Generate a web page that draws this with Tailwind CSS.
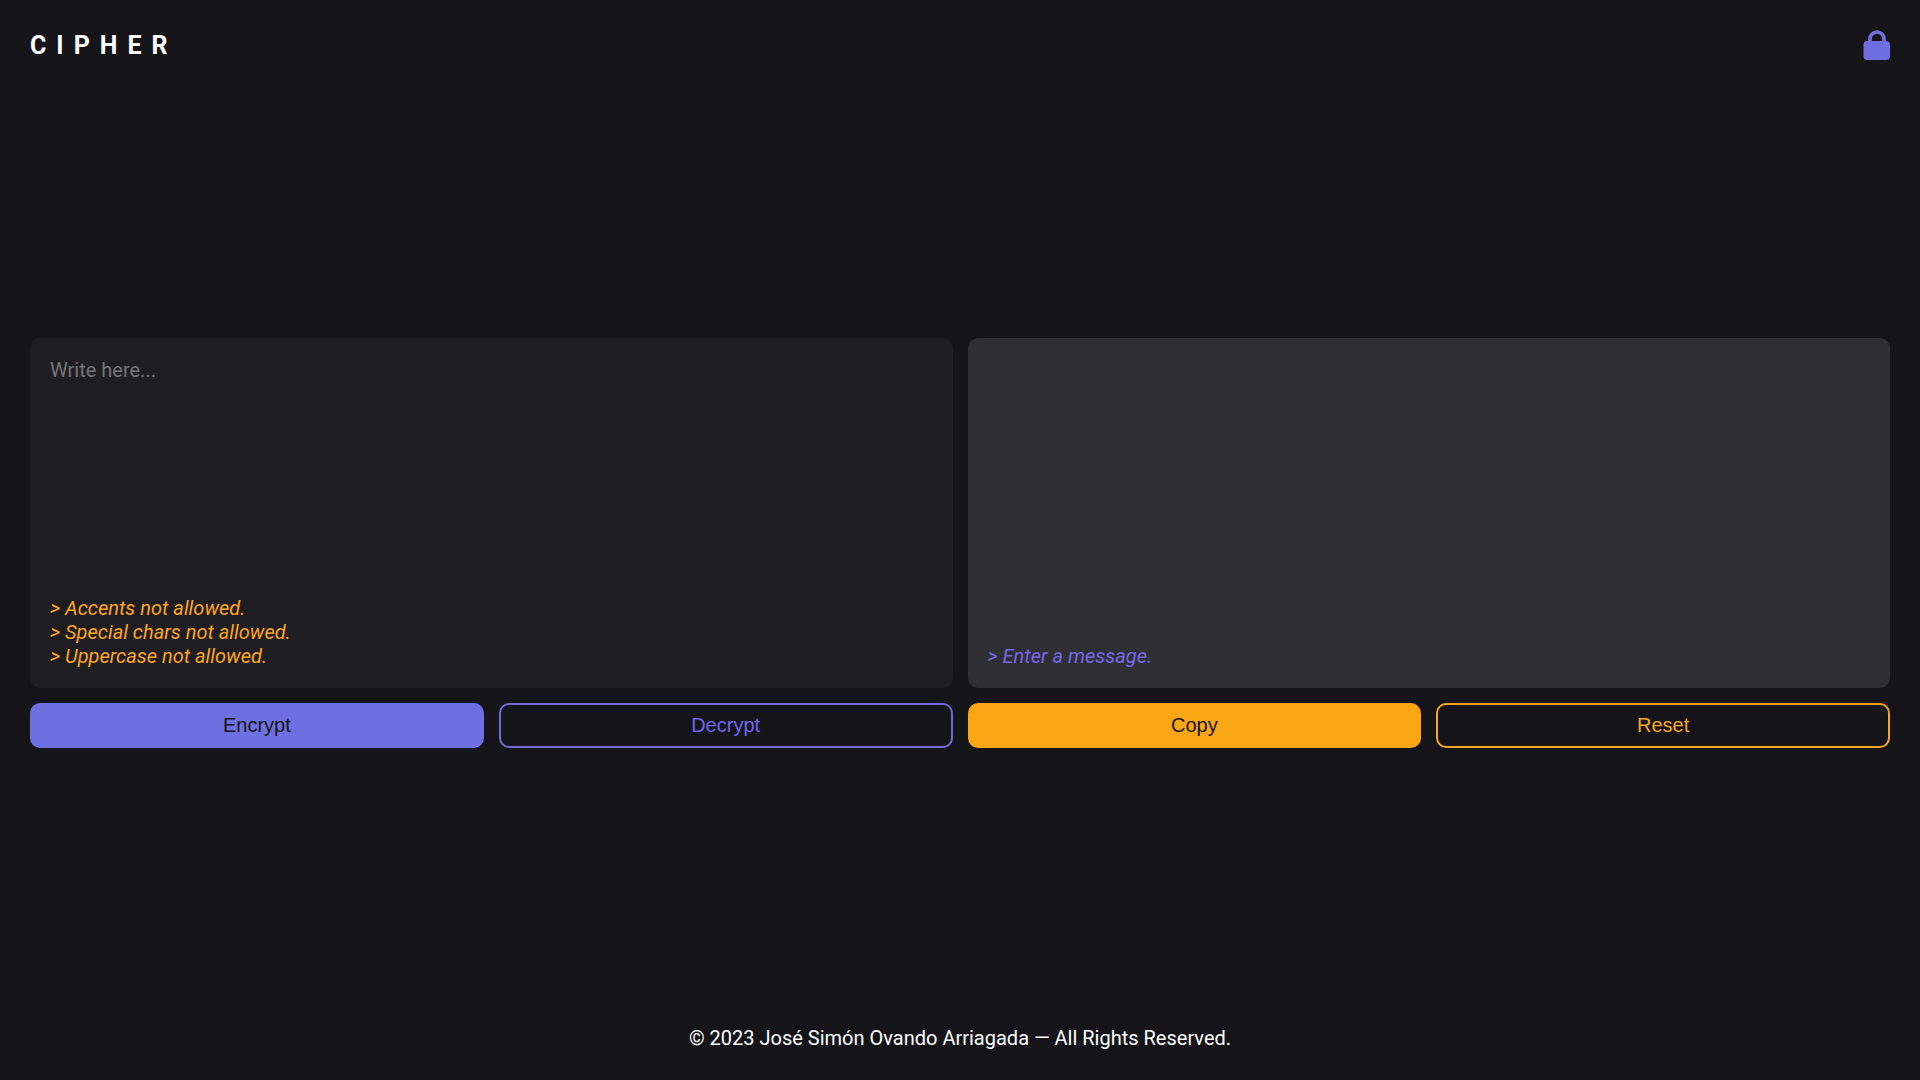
<!DOCTYPE html>
<html lang="en">
<head>
<meta charset="utf-8">
<meta name="viewport" content="width=device-width, initial-scale=1">
<title>Cipher</title>
<script src="https://cdn.jsdelivr.net/npm/@tailwindcss/browser@4"></script>
</head>
<body class="flex min-h-screen flex-col bg-[#151519] font-[Roboto,sans-serif] text-[20px] leading-6 text-white">
  <header class="flex items-center justify-between p-[30px]">
    <h1 class="text-[25px] leading-[29px] font-bold tracking-[10px]">CIPHER</h1>
    <svg class="h-[30px] w-[27px]" viewBox="0 0 27 30" fill="none" aria-hidden="true">
      <path d="M7 13V9a7 7 0 0 1 14 0V13" stroke="#6e70e2" stroke-width="3.600"/>
      <rect x="0.500" y="11" width="26.500" height="19" rx="4" fill="#6e70e2"/>
    </svg>
  </header>

  <main class="grid grow grid-cols-1 content-center gap-[15px] px-[30px] lg:grid-cols-2">
    <section class="flex flex-col gap-[15px]">
      <div class="flex h-[350px] flex-col rounded-[10px] bg-[#1e1e22] p-5">
        <textarea id="message" aria-label="Message" aria-describedby="rules" placeholder="Write here..." class="w-full grow resize-none bg-transparent outline-none placeholder:text-[#757575]"></textarea>
        <div id="rules" class="text-[#ffa51f] italic">
          <p>&gt; Accents not allowed.</p>
          <p>&gt; Special chars not allowed.</p>
          <p>&gt; Uppercase not allowed.</p>
        </div>
      </div>
      <div class="grid grid-cols-2 gap-[15px] font-['Liberation_Sans',Arial,sans-serif]">
        <button type="button" class="h-[45px] rounded-[10px] bg-[#6e70e2] pb-0.5 text-[#151519]">Encrypt</button>
        <button type="button" class="h-[45px] rounded-[10px] border-2 border-[#7568da] pb-0.5 text-[#7064ed]">Decrypt</button>
      </div>
    </section>

    <section class="flex flex-col gap-[15px]">
      <div class="flex h-[350px] flex-col justify-end rounded-[10px] bg-[#2f2e33] p-5">
        <p class="text-[#7568e8] italic">&gt; Enter a message.</p>
      </div>
      <div class="grid grid-cols-2 gap-[15px] font-['Liberation_Sans',Arial,sans-serif]">
        <button type="button" class="h-[45px] rounded-[10px] bg-[#faa613] pb-0.5 text-[#151519]">Copy</button>
        <button type="button" class="h-[45px] rounded-[10px] border-2 border-[#faa61a] pb-0.5 text-[#faa61f]">Reset</button>
      </div>
    </section>
  </main>

  <footer class="p-[30px] text-center">© 2023 José Simón Ovando Arriagada — All Rights Reserved.</footer>
</body>
</html>
